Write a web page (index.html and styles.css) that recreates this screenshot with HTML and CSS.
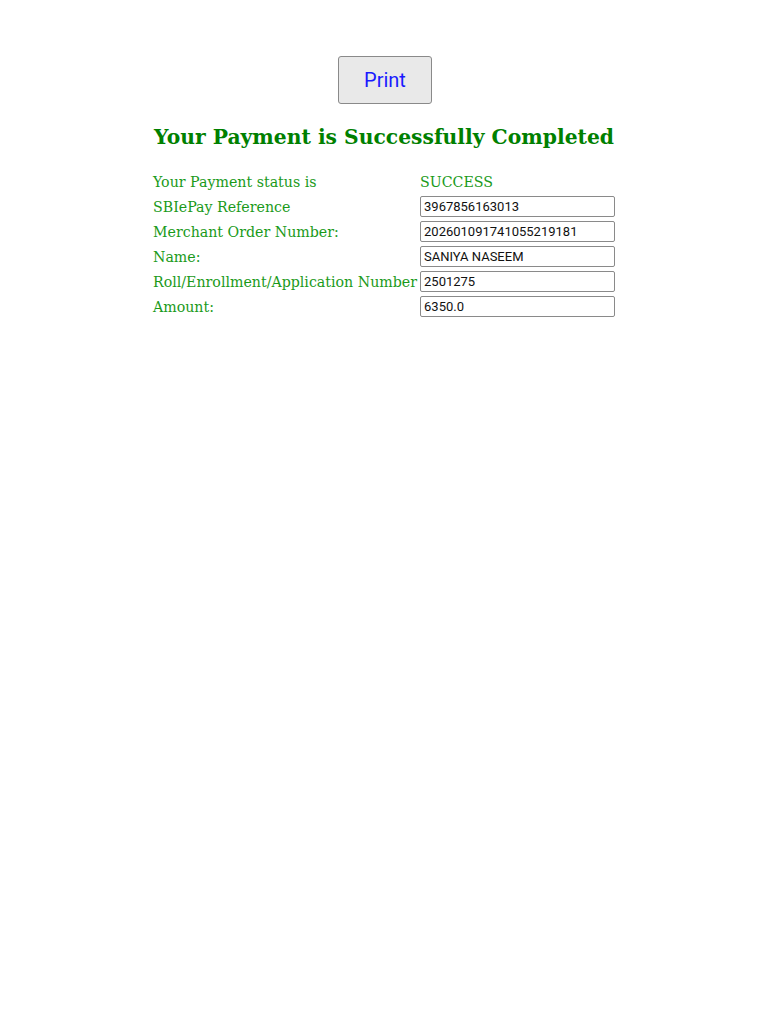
FILE: index.html
```html
<!DOCTYPE html>
<html>
<head>
<meta charset="utf-8">
<link rel="stylesheet" href="styles.css">
</head>
<body>
<div class="page">
  <div class="print-wrap"><button class="print-btn">Print</button></div>
  <h2 class="title">Your Payment is Successfully Completed</h2>
  <table class="details">
    <tr><td class="label">Your Payment status is</td><td class="value">SUCCESS</td></tr>
    <tr><td class="label">SBIePay Reference</td><td><input class="field" value="3967856163013" readonly></td></tr>
    <tr><td class="label">Merchant Order Number:</td><td><input class="field" value="202601091741055219181" readonly></td></tr>
    <tr><td class="label">Name:</td><td><input class="field" value="SANIYA NASEEM" readonly></td></tr>
    <tr><td class="label">Roll/Enrollment/Application Number</td><td><input class="field" value="2501275" readonly></td></tr>
    <tr><td class="label">Amount:</td><td><input class="field" value="6350.0" readonly></td></tr>
  </table>
</div>
</body>
</html>
```
FILE: styles.css
```css
html, body { margin: 0; padding: 0; background: #fff; }
.page { padding-top: 56px; font-family: "DejaVu Serif", serif; }
.print-wrap { display: flex; justify-content: center; padding-left: 2px; }
.print-btn {
  width: 94px; height: 48px;
  font-family: Roboto, sans-serif; font-size: 20px; color: #1a1aff;
  background: #e9e9e9; border: 1px solid #8a8a8a; border-radius: 3px; padding: 0;
}
.title {
  color: #008000; text-align: center; font-size: 20.3px; font-weight: bold;
  margin: 21px 0 19px;
}
.details { margin: 0 auto; border-collapse: separate; border-spacing: 2px 2px; }
.details td { padding: 0; height: 23px; font-size: 14.2px; color: #1a9a1a; vertical-align: middle; }
.details td.label { padding-right: 1px; }
.field {
  width: 195px; height: 21px; box-sizing: border-box; margin: 0;
  font-family: Roboto, sans-serif; font-size: 13px; color: #111;
  border: 1px solid #8a8a8a; border-radius: 2px; padding: 0 3px; background: #fff;
}
```
